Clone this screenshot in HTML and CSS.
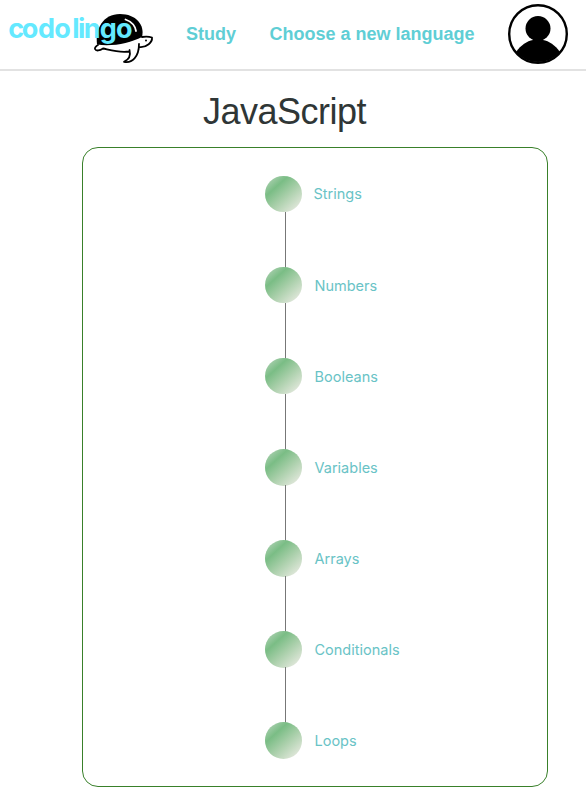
FILE: index.html
```html
<!DOCTYPE html>
<html lang="en">
<head>
<meta charset="utf-8">
<title>Codolingo</title>
<link rel="stylesheet" href="styles.css">
</head>
<body>
<header class="header">
  <svg class="logo" viewBox="0 0 160 69" role="img" aria-label="codolingo">
    <path class="ink" d="M97 44.500C95 29 103 14 120 14C136 14 145 25 142 37C130 43 112 47 97 44.500Z"/>
    <path class="shine" d="M125.500 19.500C131 21.500 135 25 136 31"/>
    <path class="outline" d="M98 45C96 46 94.500 48 95 49C96 51.500 100 50.500 103 48.500C110 50 119 53 129 51.500M142 37C145 36.500 149 36.500 152 37.500C152.500 42 147 48 139 47M129.500 50C131 56 128 60 124 61.800C132 63.500 139 57 139 44"/>
    <circle class="ink" cx="146" cy="40.500" r="1"/>
    <text class="wordmark" x="8.200 21.700 37.900 54.300 72.200 78 83.700 99.800 116" y="38">codolingo</text>
  </svg>
  <nav class="nav">
    <a>Study</a>
    <a>Choose a new language</a>
  </nav>
  <svg class="avatar" viewBox="0 0 60 60" aria-label="Profile">
    <circle class="ring" cx="30" cy="30" r="28.800"/>
    <circle class="ink" cx="30" cy="24.500" r="12.500"/>
    <path class="ink" d="M8 48C13 41 19 37 25 36H35C41 37 47 41 52 48A29 29 0 0 1 8 48Z"/>
  </svg>
</header>
<main class="main">
  <h1 class="title">JavaScript</h1>
  <ol class="path">
    <li class="step"><span class="dot"></span><span class="label first">Strings</span></li>
    <li class="step"><span class="dot"></span><span class="label">Numbers</span></li>
    <li class="step"><span class="dot"></span><span class="label">Booleans</span></li>
    <li class="step"><span class="dot"></span><span class="label">Variables</span></li>
    <li class="step"><span class="dot"></span><span class="label">Arrays</span></li>
    <li class="step"><span class="dot"></span><span class="label">Conditionals</span></li>
    <li class="step"><span class="dot"></span><span class="label">Loops</span></li>
  </ol>
</main>
</body>
</html>
```
FILE: styles.css
```css
* { box-sizing: border-box; }
body {
  margin: 0;
  height: 800px;
  overflow: hidden;
  background: #fff;
  font-family: "Liberation Sans", Arial, sans-serif;
}
.header {
  display: flex;
  align-items: flex-start;
  height: 71px;
  border-bottom: 2px solid #e2e2e2;
}
.logo { width: 160px; height: 69px; flex: none; }
.ink { fill: #000; }
.shine { fill: none; stroke: #fff; stroke-width: 1.8; stroke-linecap: round; }
.outline { fill: none; stroke: #000; stroke-width: 1.8; stroke-linejoin: round; stroke-linecap: round; }
.wordmark {
  font: 700 27px Inter, sans-serif;
  fill: #64e9ff;
}
.nav {
  display: flex;
  gap: 33.500px;
  width: 348px;
  padding: 24px 0 0 26px;
  color: #5fced5;
  font-size: 18px;
  font-weight: 700;
  line-height: 20px;
  white-space: nowrap;
}
.avatar { width: 60px; height: 60px; margin-top: 4px; flex: none; }
.ring { fill: #fff; stroke: #000; stroke-width: 2.4; }
.title {
  width: 569px;
  margin: 20px 0 0;
  text-align: center;
  color: #2f3636;
  font-size: 36px;
  font-weight: 400;
  letter-spacing: -0.5px;
  line-height: 42px;
}
.path {
  width: 466px;
  height: 640px;
  margin: 14px 0 0 82px;
  padding: 27.600px 0 0 182px;
  border: 1px solid #39802a;
  border-radius: 16px;
  list-style: none;
}
.step {
  position: relative;
  display: flex;
  align-items: flex-start;
  height: 91.150px;
}
.step:not(:last-child)::after {
  content: "";
  position: absolute;
  left: 20px;
  top: 36px;
  width: 1px;
  height: 57px;
  background: #777;
}
.dot {
  width: 37px;
  height: 36.600px;
  border-radius: 50%;
  background: linear-gradient(138deg, #a9cfae 10%, #7abd85 30%, #a9cfaa 56%, #e0e7da 88%);
}
.label {
  margin-left: 12.500px;
  color: #69c3c6;
  font: 400 14.500px/37.400px Inter, sans-serif;
}
.first { margin-left: 11.500px; line-height: 36.600px; }
```
